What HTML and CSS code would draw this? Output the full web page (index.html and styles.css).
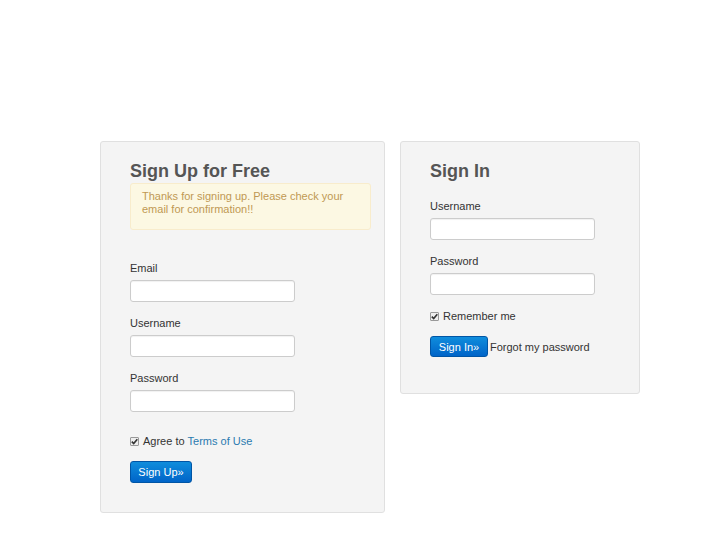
FILE: index.html
```html
<!DOCTYPE html>
<html>
<head>
<meta charset="utf-8">
<link rel="stylesheet" href="styles.css">
</head>
<body>
<div class="page">
  <div class="card card-signup">
    <h2 class="title">Sign Up for Free</h2>
    <div class="alert">Thanks for signing up. Please check your email for confirmation!!</div>
    <form class="form form-signup">
      <label class="label">Email</label>
      <input class="input" type="text">
      <label class="label">Username</label>
      <input class="input" type="text">
      <label class="label">Password</label>
      <input class="input" type="password">
      <div class="check check-gap"><span class="box"><svg viewBox="0 0 9 9" width="9" height="9"><path d="M1.8 4.6 L3.7 6.6 L7.3 2.2" fill="none" stroke="#333" stroke-width="1.6"/></svg></span>Agree to <a class="link">Terms of Use</a></div>
      <div class="actions"><button class="btn btn-up" type="button">Sign Up»</button></div>
    </form>
  </div>
  <div class="card card-signin">
    <h2 class="title">Sign In</h2>
    <form class="form">
      <label class="label">Username</label>
      <input class="input" type="text">
      <label class="label">Password</label>
      <input class="input" type="password">
      <div class="check"><span class="box"><svg viewBox="0 0 9 9" width="9" height="9"><path d="M1.8 4.6 L3.7 6.6 L7.3 2.2" fill="none" stroke="#333" stroke-width="1.6"/></svg></span>Remember me</div>
      <div class="actions"><button class="btn btn-in" type="button">Sign In»</button><span class="forgot">Forgot my password</span></div>
    </form>
  </div>
</div>
</body>
</html>
```
FILE: styles.css
```css
html, body {
  margin: 0;
  padding: 0;
  background: #fff;
  font-family: "Liberation Sans", Arial, sans-serif;
  color: #333;
}
.page {
  display: flex;
  align-items: flex-start;
  gap: 15px;
  padding: 141px 0 0 100px;
}
.card {
  box-sizing: border-box;
  background: #f4f4f4;
  border: 1px solid #e0e0e0;
  border-radius: 3px;
  padding: 0 29px;
}
.card-signup {
  width: 285px;
  height: 372px;
}
.card-signin {
  width: 240px;
  height: 253px;
}
.title {
  margin: 18px 0 0;
  font-size: 18px;
  line-height: 22px;
  font-weight: bold;
  color: #555;
}
.alert {
  box-sizing: border-box;
  margin-top: 1px;
  width: 241px;
  height: 47px;
  background: #fcf8e3;
  border: 1px solid #f8eccc;
  border-radius: 3px;
  padding: 6px 11px;
  font-size: 11px;
  line-height: 13px;
  color: #c09853;
}
.form {
  display: flex;
  flex-direction: column;
  align-items: flex-start;
  margin-top: 17px;
}
.form-signup {
  margin-top: 31px;
}
.label {
  display: block;
  font-size: 11px;
  line-height: 14px;
  color: #333;
  margin-bottom: 5px;
}
.input {
  box-sizing: border-box;
  width: 165px;
  height: 22px;
  margin: 0 0 14px;
  background: #fff;
  border: 1px solid #ccc;
  border-radius: 3px;
  box-shadow: inset 0 1px 1px rgba(0,0,0,0.06);
}
.check {
  display: flex;
  align-items: center;
  font-size: 11px;
  line-height: 14px;
  color: #333;
}
.check-gap {
  margin-top: 8px;
}
.box {
  box-sizing: border-box;
  width: 9px;
  height: 9px;
  border: 1px solid #999;
  border-radius: 1px;
  background: #eee;
  margin-right: 4px;
  display: flex;
}
.box svg {
  display: block;
  margin: -1px;
}
.link {
  color: #2a7ab0;
  margin-left: 3px;
}
.actions {
  display: flex;
  align-items: center;
  margin-top: 13px;
}
.btn {
  box-sizing: border-box;
  height: 22px;
  padding: 0;
  border: 1px solid #0055a5;
  border-radius: 3px;
  background: linear-gradient(#0f8ddc, #0064c8);
  color: #fff;
  font-family: "Liberation Sans", Arial, sans-serif;
  font-size: 11px;
  text-align: center;
}
.btn-up {
  width: 62px;
}
.btn-in {
  width: 58px;
  height: 21px;
}
.forgot {
  font-size: 11px;
  color: #333;
  margin-left: 2px;
}
```
